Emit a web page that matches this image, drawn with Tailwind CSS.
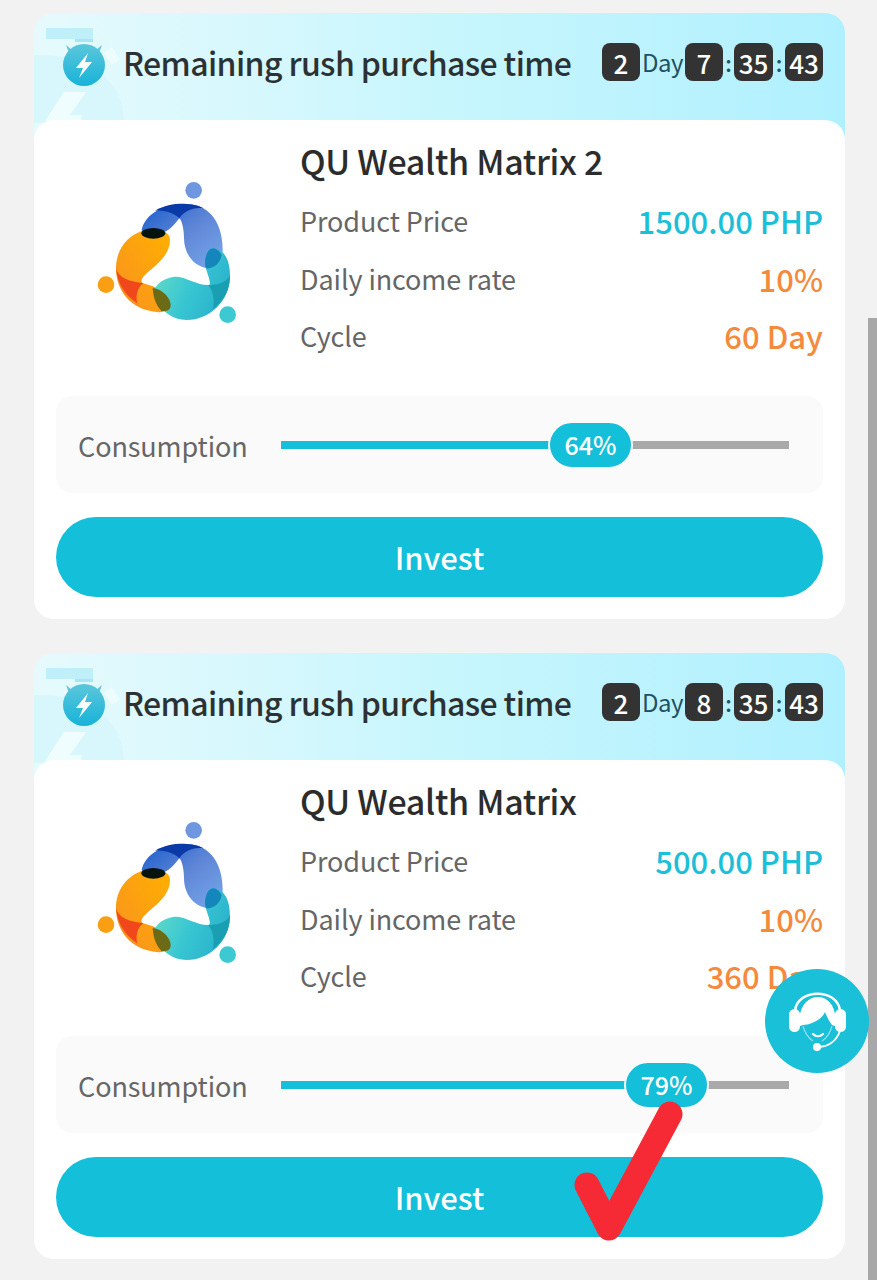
<!DOCTYPE html>
<html lang="en">
<head>
    <meta charset="UTF-8">
    <meta name="viewport" content="width=device-width, initial-scale=1.0">
    <title>Products</title>
    <script src="https://cdn.jsdelivr.net/npm/@tailwindcss/browser@4"></script>
</head>
<body class="bg-[#f2f2f2] font-['Noto_Sans_CJK_SC','Noto_Sans',sans-serif] h-[1280px] overflow-hidden relative">

    <!-- shared artwork -->
    <svg class="absolute w-0 h-0">
        <defs>
            <linearGradient id="gBlue" x1="0" y1="0" x2="1" y2="1">
                <stop offset="0" stop-color="#1a5ccc"/>
                <stop offset="0.5" stop-color="#5f86d6"/>
                <stop offset="1" stop-color="#78a8ec"/>
            </linearGradient>
            <linearGradient id="gOrange" x1="1" y1="0" x2="0" y2="1">
                <stop offset="0" stop-color="#ffb000"/>
                <stop offset="0.7" stop-color="#fb9a18"/>
                <stop offset="1" stop-color="#f57a1c"/>
            </linearGradient>
            <linearGradient id="gTeal" x1="0" y1="0" x2="1" y2="0.4">
                <stop offset="0" stop-color="#6fe0c4"/>
                <stop offset="0.6" stop-color="#38c6d2"/>
                <stop offset="1" stop-color="#2bb4cc"/>
            </linearGradient>
            <linearGradient id="gWatch" x1="0" y1="0" x2="0" y2="1">
                <stop offset="0" stop-color="#5cc6dc"/>
                <stop offset="1" stop-color="#17b3d8"/>
            </linearGradient>
        </defs>
        <symbol id="logo" viewBox="0 0 510 510">
            <circle cx="341" cy="61" r="25" fill="#6f97e0"/>
            <circle cx="78" cy="344" r="25" fill="#fb9f12"/>
            <circle cx="443" cy="434" r="25" fill="#3cc9d2"/>
            <path d="M185 180C195 130 255 100 320 102C395 105 428 165 428 240C428 275 410 295 385 295C340 290 312 250 312 205C312 175 305 150 298 145C280 170 255 195 220 195C205 195 190 190 185 180Z" fill="url(#gBlue)"/>
            <path d="M225 122C255 105 290 100 320 102C345 103 360 108 370 115C340 110 310 125 298 145C285 130 250 118 225 122Z" fill="#0a3aa8"/>
            <path d="M270 210C270 180 230 175 195 180C140 195 108 240 108 295C108 360 150 420 235 427C260 425 270 410 270 395C265 370 230 350 190 340C180 335 185 325 195 315C220 290 270 260 270 210Z" fill="url(#gOrange)"/>
            <path d="M108 295C115 325 150 335 190 340C175 350 165 375 172 400C140 380 112 345 108 295Z" fill="#f0481c"/>
            <path d="M400 235C440 240 450 280 450 320C450 390 390 450 320 450C280 450 240 425 220 375C220 340 260 320 290 320C320 322 350 345 385 345C400 345 375 300 375 280C375 255 385 235 400 235Z" fill="url(#gTeal)"/>
            <path d="M385 345C410 345 440 340 450 315C450 360 430 395 398 418C405 390 400 365 385 345Z" fill="#1a9fb2"/>
            <ellipse cx="220" cy="190" rx="36" ry="16" fill="#06140f"/>
            <path d="M218 355C245 355 272 385 272 405C272 420 260 425 245 424C230 410 220 385 218 355Z" fill="#6c6a14"/>
            <path d="M400 235C385 235 375 255 375 280C375 285 376 290 378 295C395 297 420 285 425 255C418 243 410 236 400 235Z" fill="#1486bc"/>
        </symbol>
        <symbol id="watch" viewBox="0 0 100 108">
            <rect x="12" y="13" width="47" height="11" fill="#bff0fa"/>
            <rect x="41" y="24" width="18" height="3" fill="#a8e6f4"/>
            <path d="M0 40C50 38 90 62 90 108L0 108Z" fill="#d4f6fc" opacity="0.8"/>
            <path d="M70 38L78 32L86 44L78 50Z" fill="#ecfcff"/>
            <path d="M52 77L30 77L11 106L26 106L24 108L46 108L48 100L36 100Z" fill="#f0fdff"/>
            <path d="M32 30L39 36L35 38ZM68 30L61 36L65 38Z" fill="#5cc6dc"/>
            <circle cx="50" cy="50" r="21" fill="url(#gWatch)"/>
            <path d="M54 38L42 53L49 53L45 63L58 47L51 47Z" fill="#fff"/>
        </symbol>
    </svg>

    <main class="pt-[13px] pl-[34px] w-[845px] flex flex-col gap-[34px]">

        <!-- card 1 -->
        <section class="relative h-[606px] w-[811px]">
            <div class="absolute top-0 left-0 w-full h-[130px] rounded-t-[20px] overflow-hidden bg-gradient-to-r from-[#e6fafd] via-[#c8f6fd] to-[#b0f0fe]">
                <svg class="absolute top-[2px] left-0 w-[100px] h-[108px]"><use href="#watch"/></svg>
            </div>
            <div class="relative h-[107px] pl-[89px] pr-[22px] pb-[9px] flex items-center justify-between">
                <h2 class="text-[32px] leading-[48px] font-medium text-[#2c3133] tracking-[-0.6px]">Remaining rush purchase time</h2>
                <div class="flex items-center text-white text-[26px] font-medium">
                    <span class="w-[38px] h-[38px] rounded-lg bg-[#333] flex items-center justify-center">2</span>
                    <span class="w-[45px] text-center text-[24px] font-normal text-[#23505e] tracking-[-0.5px]">Day</span>
                    <span class="w-[38px] h-[38px] rounded-lg bg-[#333] flex items-center justify-center">7</span>
                    <span class="w-[11px] text-center text-[#23505e] text-[22px] leading-none">:</span>
                    <span class="w-[39px] h-[38px] rounded-lg bg-[#333] flex items-center justify-center">35</span>
                    <span class="w-[12px] text-center text-[#23505e] text-[22px] leading-none">:</span>
                    <span class="w-[38px] h-[38px] rounded-lg bg-[#333] flex items-center justify-center">43</span>
                </div>
            </div>
            <div class="relative h-[499px] bg-white rounded-[20px] px-[22px] pt-[13px]">
                <div class="flex">
                    <svg class="w-[170px] h-[170px] ml-[24px] mt-[37px] shrink-0"><use href="#logo"/></svg>
                    <div class="ml-[50px] flex-1">
                        <h3 class="text-[34px] leading-[55px] h-[59px] font-medium text-[#2c2c2c] tracking-[-0.3px]">QU Wealth Matrix 2</h3>
                        <div class="h-[58px] flex items-center justify-between"><span class="text-[27px] text-[#666] tracking-[-0.1px]">Product Price</span><span class="text-[31px] font-medium text-[#1cbfd8]">1500.00 PHP</span></div>
                        <div class="h-[58px] flex items-center justify-between"><span class="text-[27px] text-[#666] tracking-[-0.1px]">Daily income rate</span><span class="text-[31px] font-medium text-[#f58a3c]">10%</span></div>
                        <div class="h-[57px] flex items-center justify-between"><span class="text-[27px] text-[#666] tracking-[-0.1px]">Cycle</span><span class="text-[31px] font-medium text-[#f58a3c]">60 Day</span></div>
                    </div>
                </div>
                <div class="mt-[31px] h-[97px] bg-[#fafafa] rounded-2xl pl-[22px] flex items-center">
                    <span class="w-[203px] pt-[4px] text-[27px] text-[#666] shrink-0 tracking-[-0.1px]">Consumption</span>
                    <div class="relative w-[508px] h-[8px] bg-[#a9a9a9]">
                        <div class="h-full w-[300px] bg-[#14bfd9]"></div>
                        <span class="absolute left-[267px] top-[-20px] w-[85px] h-[48px] rounded-full bg-[#14bfd9] border-2 border-[#fafafa] text-white text-[25px] font-medium flex items-center justify-center">64%</span>
                    </div>
                </div>
                <button class="mt-[24px] w-full h-[80px] rounded-full bg-[#14bfd9] text-white text-[31px] font-medium">Invest</button>
            </div>
        </section>

        <!-- card 2 -->
        <section class="relative h-[606px] w-[811px]">
            <div class="absolute top-0 left-0 w-full h-[130px] rounded-t-[20px] overflow-hidden bg-gradient-to-r from-[#e6fafd] via-[#c8f6fd] to-[#b0f0fe]">
                <svg class="absolute top-[2px] left-0 w-[100px] h-[108px]"><use href="#watch"/></svg>
            </div>
            <div class="relative h-[107px] pl-[89px] pr-[22px] pb-[9px] flex items-center justify-between">
                <h2 class="text-[32px] leading-[48px] font-medium text-[#2c3133] tracking-[-0.6px]">Remaining rush purchase time</h2>
                <div class="flex items-center text-white text-[26px] font-medium">
                    <span class="w-[38px] h-[38px] rounded-lg bg-[#333] flex items-center justify-center">2</span>
                    <span class="w-[45px] text-center text-[24px] font-normal text-[#23505e] tracking-[-0.5px]">Day</span>
                    <span class="w-[38px] h-[38px] rounded-lg bg-[#333] flex items-center justify-center">8</span>
                    <span class="w-[11px] text-center text-[#23505e] text-[22px] leading-none">:</span>
                    <span class="w-[39px] h-[38px] rounded-lg bg-[#333] flex items-center justify-center">35</span>
                    <span class="w-[12px] text-center text-[#23505e] text-[22px] leading-none">:</span>
                    <span class="w-[38px] h-[38px] rounded-lg bg-[#333] flex items-center justify-center">43</span>
                </div>
            </div>
            <div class="relative h-[499px] bg-white rounded-[20px] px-[22px] pt-[13px]">
                <div class="flex">
                    <svg class="w-[170px] h-[170px] ml-[24px] mt-[37px] shrink-0"><use href="#logo"/></svg>
                    <div class="ml-[50px] flex-1">
                        <h3 class="text-[34px] leading-[55px] h-[59px] font-medium text-[#2c2c2c] tracking-[-0.3px]">QU Wealth Matrix</h3>
                        <div class="h-[58px] flex items-center justify-between"><span class="text-[27px] text-[#666] tracking-[-0.1px]">Product Price</span><span class="text-[31px] font-medium text-[#1cbfd8]">500.00 PHP</span></div>
                        <div class="h-[58px] flex items-center justify-between"><span class="text-[27px] text-[#666] tracking-[-0.1px]">Daily income rate</span><span class="text-[31px] font-medium text-[#f58a3c]">10%</span></div>
                        <div class="h-[57px] flex items-center justify-between"><span class="text-[27px] text-[#666] tracking-[-0.1px]">Cycle</span><span class="text-[31px] font-medium text-[#f58a3c]">360 Day</span></div>
                    </div>
                </div>
                <div class="mt-[31px] h-[97px] bg-[#fafafa] rounded-2xl pl-[22px] flex items-center">
                    <span class="w-[203px] pt-[4px] text-[27px] text-[#666] shrink-0 tracking-[-0.1px]">Consumption</span>
                    <div class="relative w-[508px] h-[8px] bg-[#a9a9a9]">
                        <div class="h-full w-[380px] bg-[#14bfd9]"></div>
                        <span class="absolute left-[343px] top-[-20px] w-[85px] h-[48px] rounded-full bg-[#14bfd9] border-2 border-[#fafafa] text-white text-[25px] font-medium flex items-center justify-center">79%</span>
                    </div>
                </div>
                <button class="mt-[24px] w-full h-[80px] rounded-full bg-[#14bfd9] text-white text-[31px] font-medium">Invest</button>
            </div>
        </section>
    </main>

    <!-- scrollbar -->
    <div class="absolute top-[318px] right-0 w-[9px] h-[962px] bg-[#a8a8a8]"></div>

    <!-- support button -->
    <div class="absolute left-[765px] top-[969px] w-[104px] h-[104px] rounded-full bg-[#1abfd8] flex items-center justify-center">
        <svg class="w-[84px] h-[84px]" viewBox="0 0 84 84">
            <path d="M20 32C22 9 63 9 65 32" fill="none" stroke="#fff" stroke-width="2.5"/>
            <rect x="14" y="30" width="11" height="23" rx="5.5" fill="#fff"/>
            <rect x="60" y="30" width="11" height="23" rx="5.5" fill="#fff"/>
            <path d="M25 47C22 28 33 18 43 18C53 18 63 28 60 47L57 46C54 42 52 38 50 33C46 42 34 46 28 46Z" fill="#fff"/>
            <path d="M28 47C30 55 35 60 38 62M57 47C55 55 50 60 47 62" fill="none" stroke="#fff" stroke-width="1.2" opacity="0.5"/>
            <path d="M38 55C41 58 45 58 48 55" fill="none" stroke="#fff" stroke-width="2.2" stroke-linecap="round"/>
            <path d="M42 68C52 68 61 63 65 52" fill="none" stroke="#fff" stroke-width="2"/>
            <circle cx="42" cy="68" r="4" fill="#fff"/>
        </svg>
    </div>

    <!-- red check mark drawn over the screenshot -->
    <svg class="absolute left-[560px] top-[1090px] w-[140px] h-[160px]" viewBox="0 0 140 160">
        <path d="M27 95L49 138L110 24" fill="none" stroke="#f52a35" stroke-width="25" stroke-linecap="round" stroke-linejoin="round"/>
    </svg>
</body>
</html>
